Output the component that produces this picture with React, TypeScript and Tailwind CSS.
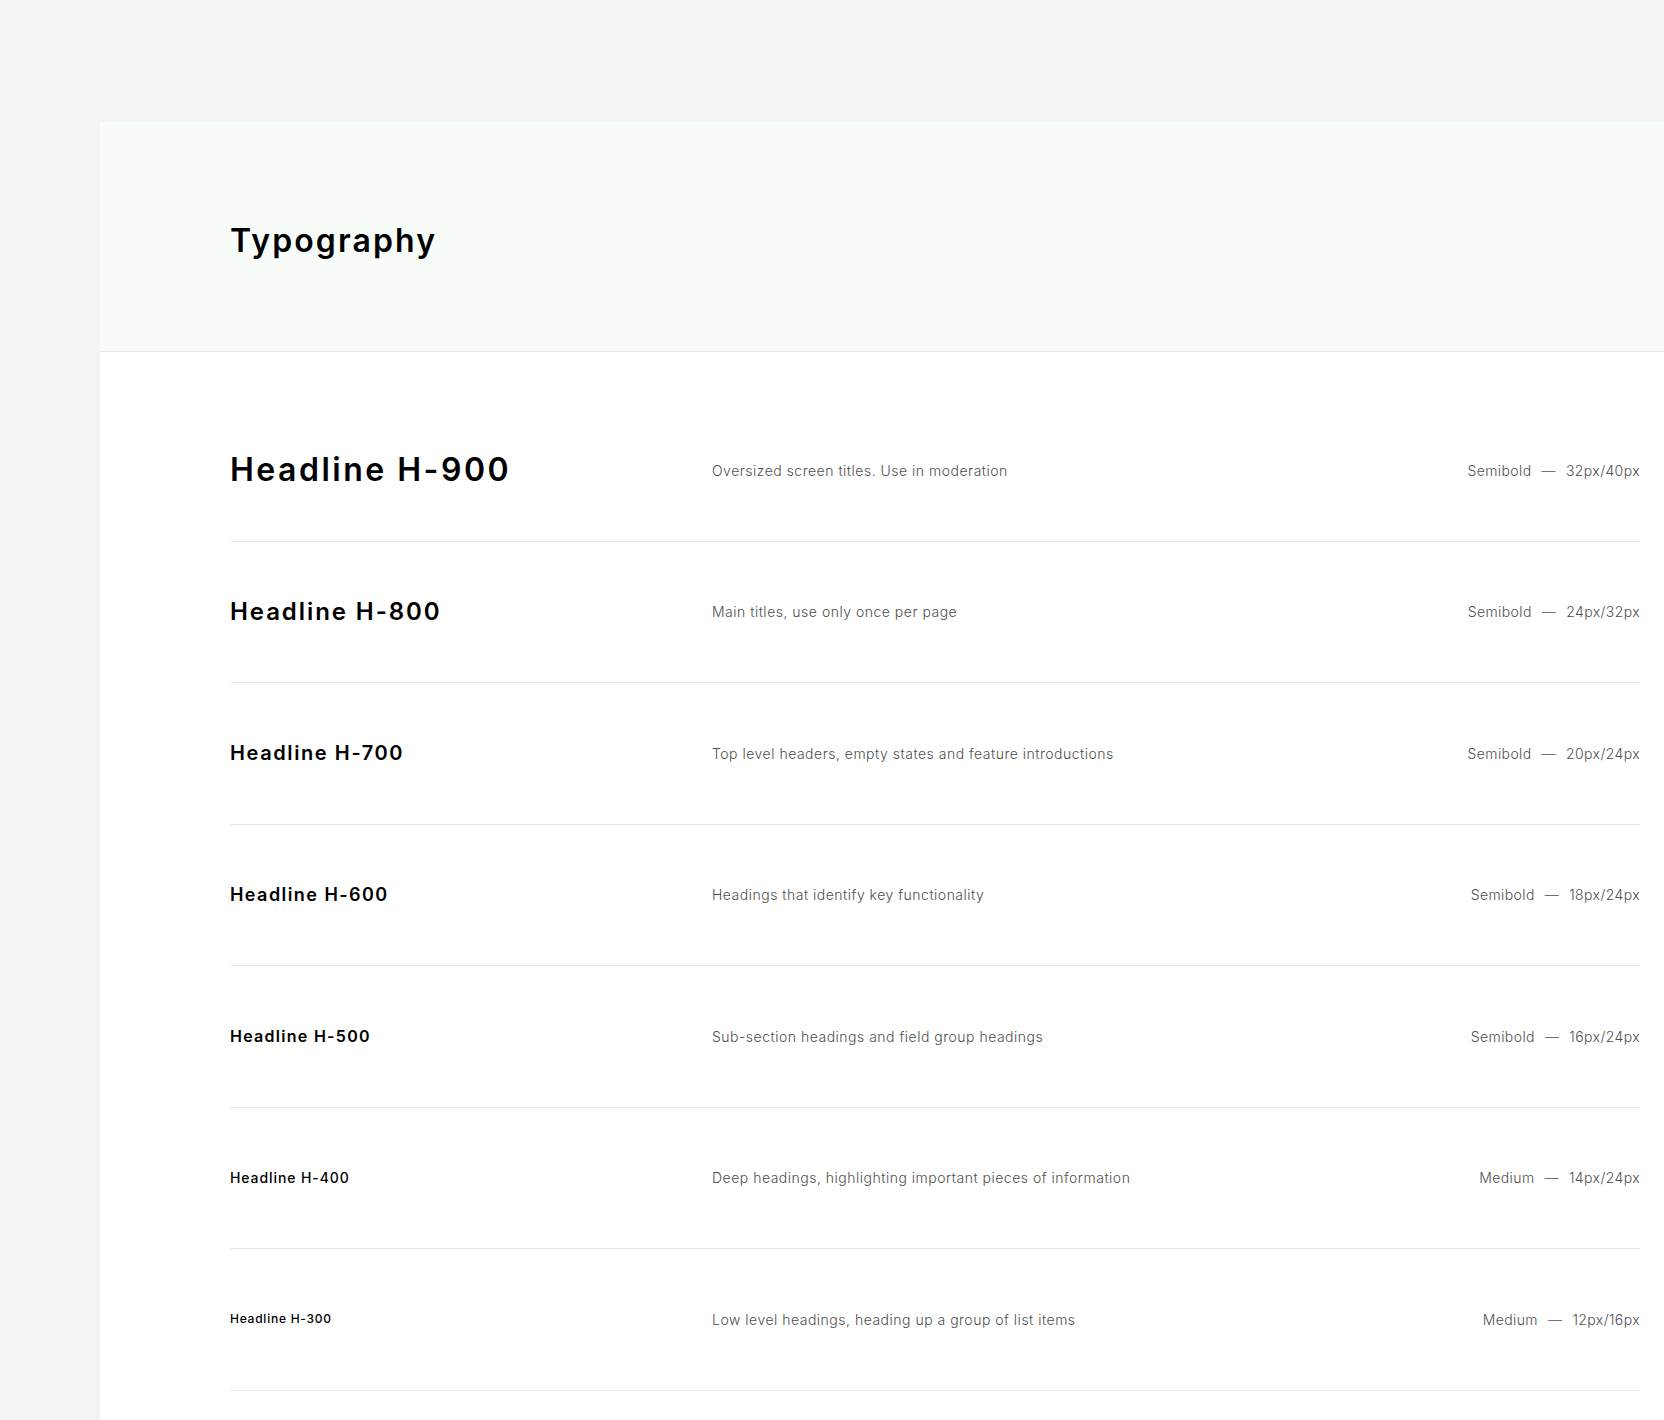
import React from 'react';

interface TypeRow {
  name: string;
  className: string;
  description: string;
  weight: string;
  size: string;
}

const rows: TypeRow[] = [
  { name: 'Headline H-900', className: 'text-[32px] leading-[40px] font-semibold tracking-[0.078em]', description: 'Oversized screen titles. Use in moderation', weight: 'Semibold', size: '32px/40px' },
  { name: 'Headline H-800', className: 'text-[24px] leading-[32px] font-semibold tracking-[0.08em]', description: 'Main titles, use only once per page', weight: 'Semibold', size: '24px/32px' },
  { name: 'Headline H-700', className: 'text-[20px] leading-[24px] font-semibold tracking-[0.08em]', description: 'Top level headers, empty states and feature introductions', weight: 'Semibold', size: '20px/24px' },
  { name: 'Headline H-600', className: 'text-[18px] leading-[24px] font-semibold tracking-[0.08em]', description: 'Headings that identify key functionality', weight: 'Semibold', size: '18px/24px' },
  { name: 'Headline H-500', className: 'text-[16px] leading-[24px] font-semibold tracking-[0.08em]', description: 'Sub-section headings and field group headings', weight: 'Semibold', size: '16px/24px' },
  { name: 'Headline H-400', className: 'text-[14px] leading-[24px] font-medium tracking-[0.065em]', description: 'Deep headings, highlighting important pieces of information', weight: 'Medium', size: '14px/24px' },
  { name: 'Headline H-300', className: 'text-[12px] leading-[16px] font-medium tracking-[0.063em]', description: 'Low level headings, heading up a group of list items', weight: 'Medium', size: '12px/16px' },
];

export default function App() {
  return (
    <div className="min-h-screen bg-[#f4f4f4] pt-[122px] pl-[100px] font-['Inter',sans-serif] text-black">
      <div className="bg-white min-h-[1298px]">
        {/* Header */}
        <div className="h-[230px] bg-[#f8fcf9] border-b border-[#e6e9ea] flex items-center pl-[130px]">
          <h1 className="text-[32px] leading-[40px] font-semibold tracking-[0.066em] mt-[8px]">Typography</h1>
        </div>

        {/* Rows */}
        <div className="pt-[48px] pl-[130px] pr-[24px]">
          {rows.map((row) => (
            <div key={row.name} className="h-[141.5px] border-b border-[#e8eaeb] flex items-center">
              <div className={`w-[482px] shrink-0 ${row.className}`}>{row.name}</div>
              <div className="flex-1 text-[14px] font-light tracking-[0.5px] text-[#4f4f4f]">{row.description}</div>
              <div className="flex items-center gap-[10px] text-[14px] font-light tracking-[0.4px] text-[#4f4f4f]">
                <span>{row.weight}</span>
                <span>—</span>
                <span>{row.size}</span>
              </div>
            </div>
          ))}
        </div>
      </div>
    </div>
  );
}
